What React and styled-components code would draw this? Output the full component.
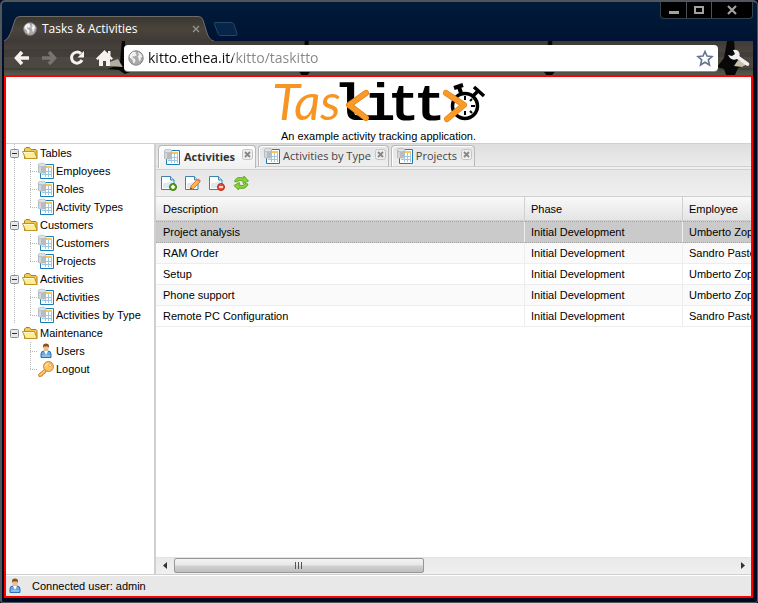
import React from "react";
import styled, { createGlobalStyle, css } from "styled-components";

const GlobalStyle = createGlobalStyle`
  * { box-sizing: border-box; }
  body { margin: 0; background: #00091f; }
  button, input { font: inherit; color: inherit; }
  button { padding: 0; border: 0; background: none; }
  ul { list-style: none; margin: 0; padding: 0; }
`;

const ui = `"Liberation Sans", Arial, sans-serif`;
const segoe = `"Open Sans", "Noto Sans", sans-serif`;

const BrowserWindow = styled.div`
  display: flex;
  flex-direction: column;
  min-height: 100vh;
  padding: 0 4px 4px 2px;
  border: 2px solid #50565c;
  border-right-width: 1px;
  border-bottom-width: 1px;
  border-radius: 5px 5px 3px 3px;
  background: linear-gradient(#001c38, #001233 40px, #00091f 80px);
  font: 11px/14px ${ui};
  color: #000;
  overflow: hidden;
`;

const TitleBar = styled.header`
  display: flex;
  align-items: flex-end;
  height: 39px;
`;

const BrowserTab = styled.div`
  position: relative;
  display: flex;
  align-items: center;
  gap: 5px;
  width: 210px;
  height: 25px;
  padding: 0 13px 0 19px;
  color: #fff;
  font: 12px/16px ${segoe};
`;

const TabShape = styled.svg`
  position: absolute;
  inset: 0;
`;

const TabTitle = styled.span`
  position: relative;
  flex: 1;
  white-space: nowrap;
`;

const IconButton = styled.button`
  position: relative;
  display: flex;
  align-items: center;
  justify-content: center;
  width: ${(p) => p.$w || 16}px;
  height: ${(p) => p.$h || 16}px;
  flex: none;
`;

const IconSvg = styled.svg`
  position: relative;
  display: block;
  flex: none;
  overflow: visible;
`;

const WindowControls = styled.div`
  display: flex;
  align-self: flex-start;
  margin-left: auto;
  height: 17px;
  border: 1px solid #37414d;
  border-top: 0;
  border-radius: 0 0 4px 4px;
  background: #000;
  overflow: hidden;

  button + button { border-left: 1px solid #4d5359; }
`;

const NavBar = styled.nav`
  position: relative;
  display: flex;
  align-items: center;
  height: 34px;
  padding: 0 3px 0 7px;
  background: linear-gradient(#3f3a36, #4e4842 14px, #474740 28px, #55594c);
`;

const NavScene = styled.svg`
  position: absolute;
  left: 0;
  top: 0;
  width: 100%;
  height: 34px;
`;

const AddressBar = styled.label`
  position: relative;
  display: flex;
  align-items: center;
  gap: 4px;
  flex: 1;
  height: 26px;
  margin: 0 10px 0 3px;
  padding: 0 5px 0 4px;
  border-radius: 4px;
  background: #fff;
  box-shadow: 0 1px 0 #8a8d84;
`;

const AddressInput = styled.input`
  flex: 1;
  min-width: 0;
  height: 26px;
  padding: 0;
  border: 0;
  outline: 0;
  font: 14px/26px ${segoe};
  color: transparent;
  background: linear-gradient(90deg, #101010 85px, #858585 85px);
  background-clip: text;
  -webkit-background-clip: text;
`;

const Page = styled.main`
  display: flex;
  flex-direction: column;
  flex: 1;
  min-width: 0;
  border: 2px solid #f00;
  background: #fff;
`;

const Banner = styled.header`
  display: flex;
  flex-direction: column;
  align-items: center;
  height: 67px;
  border-bottom: 1px solid #d0d0d0;
`;

const Tagline = styled.p`
  margin: 0;
`;

const Workspace = styled.div`
  display: flex;
  flex: 1;
  min-height: 0;
`;

const Sidebar = styled.nav`
  width: 150px;
  flex: none;
  border-right: 2px solid #d0d0d0;
`;

const Group = styled.li`
  background: ${(p) =>
    p.$last
      ? "none"
      : "repeating-linear-gradient(#b8b8b8 0 1px, transparent 1px 2px) 8px 0 / 1px 100% no-repeat"};
`;

const treeText = css`
  display: flex;
  align-items: center;
  height: 18px;
  color: #000;
  text-decoration: none;
  white-space: nowrap;
`;

const Folder = styled.button`
  ${treeText}
  gap: 2px;
  padding-left: 4px;
`;

const Leaves = styled.ul`
  margin-left: 24px;
`;

const Leaf = styled.li`
  background:
    repeating-linear-gradient(#b8b8b8 0 1px, transparent 1px 2px) 0 0 / 1px ${(p) => (p.$last ? "9px" : "100%")} no-repeat,
    repeating-linear-gradient(90deg, #b8b8b8 0 1px, transparent 1px 2px) 0 9px / 8px 1px no-repeat;
`;

const LeafLink = styled.a`
  ${treeText}
  gap: 2px;
  padding-left: 8px;
`;

const Content = styled.section`
  display: flex;
  flex-direction: column;
  flex: 1;
  min-width: 0;
`;

const TabStrip = styled.div`
  display: flex;
  gap: 2px;
  height: 26px;
  padding: 1px 2px 2px;
  border-bottom: 1px solid #d0d0d0;
  background: linear-gradient(#dedede, #ececec 22px, #d0d0d0 22px, #d0d0d0 23px, #f0f0f0 23px);
`;

const DocTab = styled.div`
  display: flex;
  height: ${(p) => (p.$active ? 23 : 22)}px;
  padding: 0 1px 0 5px;
  border: 1px solid #b9b9b9;
  border-bottom: ${(p) => (p.$active ? "0" : "1px solid #d0d0d0")};
  border-radius: 4px 4px 0 0;
  box-shadow: inset 1px 1px 0 #fff;
  background: ${(p) =>
    p.$active ? "linear-gradient(#fff, #f0f0f0)" : "linear-gradient(#e4e4e4, #eeeeee)"};
  color: ${(p) => (p.$active ? "#333" : "#444")};
  font: ${(p) => (p.$active ? "bold " : "")}11px/14px ${segoe};
  & > button:last-child { margin-left: ${(p) => (p.$active ? 6 : 3)}px; }
`;

const DocTabButton = styled.button`
  display: flex;
  align-items: center;
  gap: ${(p) => (p.$active ? 4 : 3)}px;
  white-space: nowrap;
`;

const ToolBar = styled.div`
  display: flex;
  align-items: center;
  gap: 8px;
  height: 27px;
  padding: 0 5px;
  border-bottom: 1px solid #d0d0d0;
  background: linear-gradient(#e6e6e6, #efefef);
`;

const GridScroller = styled.div`
  flex: 1;
  min-height: 0;
  overflow: hidden;
`;

const Grid = styled.table`
  width: 100%;
  min-width: 700px;
  table-layout: fixed;
  border-collapse: separate;
  border-spacing: 0;
`;

const Col = styled.col`
  width: ${(p) => (p.$w ? `${p.$w}px` : "auto")};
`;

const HeadCell = styled.th`
  height: 24px;
  padding: 0 7px;
  border-right: 1px solid #d0d0d0;
  border-bottom: 1px solid #d0d0d0;
  background: linear-gradient(#f9f9f9, #e4e4e4);
  font-weight: normal;
  text-align: left;
  & + & { padding-left: 6px; }
`;

const BodyCell = styled.td`
  height: 21px;
  padding: 0 7px;
  border-right: 1px solid #ededed;
  border-bottom: 1px solid #ededed;
  white-space: nowrap;
  & + & { padding-left: 6px; }
`;

const Row = styled.tr`
  background: ${(p) => (p.$selected ? "#cacaca" : p.$striped ? "#fafafa" : "#fff")};
  ${(p) =>
    p.$selected &&
    css`
      ${BodyCell} {
        height: 22px;
        border-top: 1px dotted #a3a3a3;
        border-bottom: 1px dotted #a3a3a3;
      }
    `}
`;

const ScrollBar = styled.div`
  display: flex;
  height: 17px;
  padding: 0 0 1px;
  border-top: 1px solid #e3e3e3;
  background: linear-gradient(#e9e9e9, #f0f0f0);
`;

const Thumb = styled.button`
  display: flex;
  align-items: center;
  justify-content: center;
  width: 42%;
  border: 1px solid #979797;
  border-radius: 2px;
  background: linear-gradient(#f3f3f3, #e8e8e8 45%, #d1d1d3 55%, #bcbdbf);
`;

const Track = styled.div`
  flex: 1;
`;

const StatusBar = styled.footer`
  display: flex;
  align-items: center;
  gap: 9px;
  height: 22px;
  padding: 0 1px;
  border-top: 1px solid #d0d0d0;
  box-shadow: inset 0 1px 0 #fff;
  background: #e8e8e8;
`;

function Globe({ size = 16 }) {
  return (
    <IconSvg width={size} height={size} viewBox="0 0 16 16" aria-hidden="true">
      <circle cx="8" cy="8" r="7.200" fill="#a9a9a9" stroke="#858585" />
      <path d="M2 4.500 5 1.800 8 2 7.500 3.500 9 5 6.500 6.500 5 6 4.500 7.500 7 9 7.500 11 6 13.500 5 12 4.500 9.500 1.500 7.500ZM10 2 13 4 14.500 7 13 7.500 12.500 10.500 11 11 10.500 8 9.500 6.500 11 5Z" fill="#f1f1f1" />
    </IconSvg>
  );
}

function DataIcon() {
  return (
    <IconSvg width="16" height="16" viewBox="0 0 16 16" aria-hidden="true">
      <path d="M2.500 1.500h13v14h-13z" fill="#fff" stroke="#1a7eb4" />
      <path d="M8 3h6v2H8z" fill="#ffc64b" />
      <path d="M4 8.500h10M4 11.500h10M7.500 5v9M10.500 5v9M13.500 5v9" stroke="#9ec8e2" fill="none" />
      <path d="M0 2v7c0 2 8 2 8 0V2z" fill="#b5bdc3" />
      <path d="M2 3v6.500" stroke="#dce1e5" strokeWidth="1.500" />
      <ellipse cx="4" cy="2" rx="4" ry="1.800" fill="#dde1e4" stroke="#a7afb5" strokeWidth=".6" />
    </IconSvg>
  );
}

function FolderIcon() {
  return (
    <IconSvg width="16" height="16" viewBox="0 0 16 16" aria-hidden="true">
      <path d="M2.500 13.500V4l1.500-1.500h3.500L9 4.500h5l1 1v8z" fill="#f1cb55" stroke="#a9831f" />
      <path d="M.5 6.500h12l2.500 7H3.500z" fill="#ffec94" stroke="#bc942a" />
      <path d="M1.500 7.500h10.500" stroke="#fffbd8" />
    </IconSvg>
  );
}

function Collapse() {
  return (
    <IconSvg width="10" height="10" viewBox="0 0 10 10" aria-hidden="true">
      <rect x=".5" y="1.500" width="8" height="8" rx="1" fill="#e9e9e6" stroke="#8391a2" />
      <path d="M2 5.500h5" stroke="#202b50" />
    </IconSvg>
  );
}

function UserIcon() {
  return (
    <IconSvg width="16" height="16" viewBox="0 0 16 16" aria-hidden="true">
      <path d="M3 14.500V11q0-3 3-3h4q3 0 3 3v3.500z" fill="#68a9e0" stroke="#2d71b5" />
      <path d="M6 8h4l-2 4z" fill="#fff" />
      <path d="M4 13h8" stroke="#a8d4f7" />
      <rect x="5.500" y="2" width="5" height="6" rx="2.300" fill="#eec08d" />
      <path d="M5 5V3q0-2.500 3-2.500T11 3v2L10 3.500H6z" fill="#8a501d" />
    </IconSvg>
  );
}

function KeyIcon() {
  return (
    <IconSvg width="16" height="16" viewBox="0 0 16 16" aria-hidden="true">
      <path d="m7 8-6.500 5.500.5 2 3-.5 1-2 2-.5.500-2 2-1" fill="#ffc76a" stroke="#c87b22" />
      <circle cx="10.500" cy="5.500" r="4.900" fill="#ffc76a" stroke="#c87b22" />
      <path d="M7.500 5.500q0-3 3-3" stroke="#ffedb9" fill="none" />
      <circle cx="12" cy="4.200" r="1.400" fill="#fff" stroke="#c87b22" strokeWidth=".6" />
    </IconSvg>
  );
}

function PageIcon({ kind }) {
  return (
    <IconSvg width="16" height="16" viewBox="0 0 16 16" aria-hidden="true">
      <path d="M.5 1.500h9l3.500 3.500v9.500H.5z" fill="#fff" stroke="#3f82ab" />
      <path d="M2 8.500 11.500 6v7H2z" fill="#dcebf3" />
      <path d="M9.500 1.500V5H13" fill="#c5e1f1" stroke="#3f82ab" />
      {kind === "edit" ? (
        <g>
          <path d="m5 14.500 1-3.500L12.500 4.500 15 7 8.500 13.500z" fill="#ffb351" stroke="#ca6e1c" strokeWidth=".8" />
          <path d="m12 5 1.500-1.500L16 6l-1.500 1.500z" fill="#df7773" />
          <path d="m5 14.500 1-2 1 1z" fill="#333" />
        </g>
      ) : (
        <g>
          <circle cx="12" cy="12" r="3.500" fill={kind === "add" ? "#64aa22" : "#e74e38"} stroke={kind === "add" ? "#39760e" : "#b52b1b"} />
          <path d={kind === "add" ? "M10 12h4M12 10v4" : "M10 12h4"} stroke="#fff" strokeWidth="1.500" />
        </g>
      )}
    </IconSvg>
  );
}

function RefreshIcon() {
  return (
    <IconSvg width="16" height="16" viewBox="0 0 16 16" fill="#8bd12f" stroke="#4d9a1c" strokeWidth=".8" aria-hidden="true">
      <path d="M1.500 6.500Q3 2 7.500 2.500L10.500 3l.5-2L15.500 6 10 8.500l.3-2.500-3-.5Q5 5 4.500 7z" />
      <path d="M15 9q-1.500 4.500-6 4.500l-3-.5-.5 2L1 10.500 6.500 7.500 6 10l3 .5q2.500 0 3-2z" />
    </IconSvg>
  );
}

function CloseBox() {
  return (
    <IconSvg width="11" height="11" viewBox="0 0 11 11" aria-hidden="true">
      <rect x=".5" y=".5" width="10" height="10" rx="2" fill="#eee" stroke="#c4c4c4" />
      <path d="m3 3 5 5m0-5-5 5" stroke="#858585" strokeWidth="1.800" />
    </IconSvg>
  );
}

function Logo() {
  return (
    <IconSvg width="212" height="52" viewBox="0 0 212 52" role="img" aria-label="Taskitto">
      <text x="-1" y="43" fill="#f79522" fontFamily="Lato, sans-serif" fontStyle="italic" fontSize="51">Tas</text>
      <g fontFamily="Liberation Mono, monospace" fontWeight="bold" fontSize="52" fill="#000">
        <text x="61" y="43">l</text>
        <text x="91" y="43">i</text>
        <text x="115" y="43">t</text>
        <text x="141" y="43">t</text>
      </g>
      <g fill="none" stroke="#000">
        <circle cx="192" cy="29" r="12.500" strokeWidth="3.500" />
        <path d="m188 16-2-6M181 11l9-3" strokeWidth="4" />
        <path d="m200 19 5-5M201 10l10 9" strokeWidth="3.500" />
        <path d="M192 19v4M202 29h-4M192 38v-4M199 22l-2 2M199 36l-2-2" strokeWidth="2" />
      </g>
      <g fill="none" strokeLinejoin="round" strokeLinecap="round">
        <path d="M93 16 76 28l17 13M173 16l18 12-17 14" stroke="#dd7911" strokeWidth="6" />
        <path d="M93 16 76 28l17 13M173 16l18 12-17 14" stroke="#f99b29" strokeWidth="5" />
      </g>
    </IconSvg>
  );
}

const groups = [
  { name: "Tables", items: ["Employees", "Roles", "Activity Types"] },
  { name: "Customers", items: ["Customers", "Projects"] },
  { name: "Activities", items: ["Activities", "Activities by Type"] },
  { name: "Maintenance", items: ["Users", "Logout"] },
];

const leafIcons = { Users: UserIcon, Logout: KeyIcon };

const rows = [
  ["Project analysis", "Initial Development", "Umberto Zoppi"],
  ["RAM Order", "Initial Development", "Sandro Pastelli"],
  ["Setup", "Initial Development", "Umberto Zoppi"],
  ["Phone support", "Initial Development", "Umberto Zoppi"],
  ["Remote PC Configuration", "Initial Development", "Sandro Pastelli"],
];

function Chrome() {
  return (
    <>
      <TitleBar>
        <BrowserTab>
          <TabShape width="212" height="25" viewBox="0 0 212 25" aria-hidden="true">
            <defs>
              <linearGradient id="tabFill" x2="0" y2="1">
                <stop offset="0" stopColor="#393631" />
                <stop offset=".5" stopColor="#4a443c" />
                <stop offset="1" stopColor="#3f3a36" />
              </linearGradient>
            </defs>
            <path d="M0 25Q5 23 8 13l3-9q1-3.500 5-3.500h178q4 0 5 3.500l4 13q2 7 7 8z" fill="url(#tabFill)" />
            <path d="M0 25Q5 23 8 13l3-9q1-3.500 5-3.500h178q4 0 5 3.500l4 13q2 7 7 8" fill="none" stroke="#706d69" />
          </TabShape>
          <Globe size={14} />
          <TabTitle>Tasks &amp; Activities</TabTitle>
          <IconButton $w={10} aria-label="Close tab">
            <IconSvg width="8" height="8" viewBox="0 0 8 8" stroke="#969593" strokeWidth="1.300"><path d="m1 1 6 6m0-6L1 7" /></IconSvg>
          </IconButton>
        </BrowserTab>
        <IconButton $w={24} $h={24} aria-label="New tab">
          <IconSvg width="24" height="14" viewBox="0 0 24 14"><path d="M1 .5h16q2 0 3 2l3 9q.5 2-1.500 2H7q-2 0-3-2L.5 2Q0 .5 1 .5z" fill="#062549" stroke="#24476b" /></IconSvg>
        </IconButton>
        <WindowControls>
          <IconButton $w={25} aria-label="Minimize">
            <IconSvg width="10" height="10" viewBox="0 0 10 10"><path d="M0 6h10v3H0z" fill="#a2a2a2" /></IconSvg>
          </IconButton>
          <IconButton $w={25} aria-label="Maximize">
            <IconSvg width="10" height="8" viewBox="0 0 10 8"><path d="M1 1h8v6H1z" fill="none" stroke="#a2a2a2" strokeWidth="2" /></IconSvg>
          </IconButton>
          <IconButton $w={41} aria-label="Close">
            <IconSvg width="10" height="8" viewBox="0 0 10 8"><path d="m1 0 8 8m0-8L1 8" stroke="#a2a2a2" strokeWidth="2.200" /></IconSvg>
          </IconButton>
        </WindowControls>
      </TitleBar>
      <NavBar aria-label="Browser">
        <NavScene viewBox="0 0 750 34" preserveAspectRatio="none" aria-hidden="true">
          <path d="M0 8h100l60 3h590v5H0zM0 27h750v2H0z" fill="#3d3832" opacity=".6" />
          <path d="M118 0h3l2 16 6 5v9l-8 3-6-4-11-1 12-5z" fill="#080808" />
          <path d="m106 21 8-3 5 8-14-1z" fill="#b4aea0" />
          <path d="M301 0h4v5h-4zM295 30h12l-3 4h-6zM545 0h4v5h-5zM540 30h12l-3 4h-6z" fill="#050505" />
          <path d="M724 0h7l1 11 9 7 4 6-10 3-3 7h-9l-2-6-7-2 7-9z" fill="#080808" />
          <path d="m735 19 10 4-6 3-8-1z" fill="#c8bea9" />
        </NavScene>
        <IconButton $w={20} $h={20} aria-label="Back">
          <IconSvg width="15" height="14" viewBox="0 0 15 14" fill="none" stroke="#f4f1ee" strokeWidth="3.500"><path d="M15 7H3M8 1 2.500 7 8 13" /></IconSvg>
        </IconButton>
        <IconButton $w={36} $h={20} aria-label="Forward">
          <IconSvg width="15" height="14" viewBox="0 0 15 14" fill="none" stroke="#77736f" strokeWidth="3.500"><path d="M0 7h12M7 1l5.500 6L7 13" /></IconSvg>
        </IconButton>
        <IconButton $w={20} $h={20} aria-label="Reload">
          <IconSvg width="16" height="16" viewBox="0 0 16 16" fill="none" stroke="#f4f1ee" strokeWidth="3"><path d="M12 3.800A5.500 5.500 0 1 0 13 10" /><path d="M15 1v6.500H8.500z" fill="#f4f1ee" stroke="none" /></IconSvg>
        </IconButton>
        <IconButton $w={34} $h={20} aria-label="Home">
          <IconSvg width="17" height="16" viewBox="0 0 17 16" fill="#f4f1ee"><path d="M8.500 0 12 3.500V1h2.500v5L17 8.500 15.500 10 14 9v7h-4v-5H7v5H3V9l-1.500 1L0 8.500z" /></IconSvg>
        </IconButton>
        <AddressBar>
          <Globe />
          <AddressInput aria-label="Address" defaultValue="kitto.ethea.it/kitto/taskitto" />
          <IconButton $w={16} $h={18} aria-label="Bookmark">
            <IconSvg width="16" height="16" viewBox="0 0 16 16" fill="#fff" stroke="#66758d" strokeWidth="1.600"><path d="m8 1.500 2 4.500 5 .5-3.700 3.300L12.500 15 8 12.300 3.500 15l1.200-5.200L1 6.500 6 6z" /></IconSvg>
          </IconButton>
        </AddressBar>
        <IconButton $w={22} $h={22} aria-label="Settings">
          <IconSvg width="22" height="18" viewBox="0 0 22 18" fill="#f2f0ee"><path d="M5 1q4-1 6 2 1 2 .5 4L21 14q1 3-2 3L9 10q-4 2-7-1L0 6l4 1 3-2z" /></IconSvg>
        </IconButton>
      </NavBar>
    </>
  );
}

function Tree() {
  return (
    <Sidebar aria-label="Application menu">
      <ul>
        {groups.map((group, g) => (
          <Group key={group.name} $last={g === groups.length - 1}>
            <Folder aria-expanded="true">
              <Collapse />
              <FolderIcon />
              {group.name}
            </Folder>
            <Leaves>
              {group.items.map((item, i) => {
                const Icon = leafIcons[item] || DataIcon;
                return (
                  <Leaf key={item} $last={i === group.items.length - 1}>
                    <LeafLink href="#">
                      <Icon />
                      {item}
                    </LeafLink>
                  </Leaf>
                );
              })}
            </Leaves>
          </Group>
        ))}
      </ul>
    </Sidebar>
  );
}

export default function App() {
  return (
    <>
      <GlobalStyle />
      <BrowserWindow>
        <Chrome />
        <Page>
          <Banner>
            <Logo />
            <Tagline>An example activity tracking application.</Tagline>
          </Banner>
          <Workspace>
            <Tree />
            <Content>
              <TabStrip role="tablist">
                {["Activities", "Activities by Type", "Projects"].map((name, i) => (
                  <DocTab key={name} $active={i === 0}>
                    <DocTabButton role="tab" $active={i === 0} aria-selected={i === 0}>
                      <DataIcon />
                      {name}
                    </DocTabButton>
                    <IconButton $w={13} aria-label={`Close ${name}`}>
                      <CloseBox />
                    </IconButton>
                  </DocTab>
                ))}
              </TabStrip>
              <ToolBar role="toolbar">
                <IconButton aria-label="Add"><PageIcon kind="add" /></IconButton>
                <IconButton aria-label="Edit"><PageIcon kind="edit" /></IconButton>
                <IconButton aria-label="Delete"><PageIcon kind="delete" /></IconButton>
                <IconButton aria-label="Refresh"><RefreshIcon /></IconButton>
              </ToolBar>
              <GridScroller>
                <Grid>
                  <colgroup>
                    <Col $w={369} />
                    <Col $w={158} />
                    <Col />
                  </colgroup>
                  <thead>
                    <tr>
                      <HeadCell>Description</HeadCell>
                      <HeadCell>Phase</HeadCell>
                      <HeadCell>Employee</HeadCell>
                    </tr>
                  </thead>
                  <tbody>
                    {rows.map((row, r) => (
                      <Row key={row[0]} $selected={r === 0} $striped={r % 2 === 1}>
                        {row.map((cell, c) => (
                          <BodyCell key={c}>{cell}</BodyCell>
                        ))}
                      </Row>
                    ))}
                  </tbody>
                </Grid>
              </GridScroller>
              <ScrollBar>
                <IconButton $w={18} $h={14} aria-label="Scroll left">
                  <IconSvg width="4" height="7" viewBox="0 0 4 7"><path d="M4 0v7L0 3.500z" fill="#333" /></IconSvg>
                </IconButton>
                <Thumb aria-label="Scroll position">
                  <IconSvg width="9" height="7" viewBox="0 0 9 7" stroke="#555"><path d="M1.500 0v7M4.500 0v7M7.500 0v7" /></IconSvg>
                </Thumb>
                <Track />
                <IconButton $w={17} $h={14} aria-label="Scroll right">
                  <IconSvg width="4" height="7" viewBox="0 0 4 7"><path d="M0 0v7l4-3.500z" fill="#333" /></IconSvg>
                </IconButton>
              </ScrollBar>
            </Content>
          </Workspace>
          <StatusBar>
            <UserIcon />
            <span>Connected user: admin</span>
          </StatusBar>
        </Page>
      </BrowserWindow>
    </>
  );
}
